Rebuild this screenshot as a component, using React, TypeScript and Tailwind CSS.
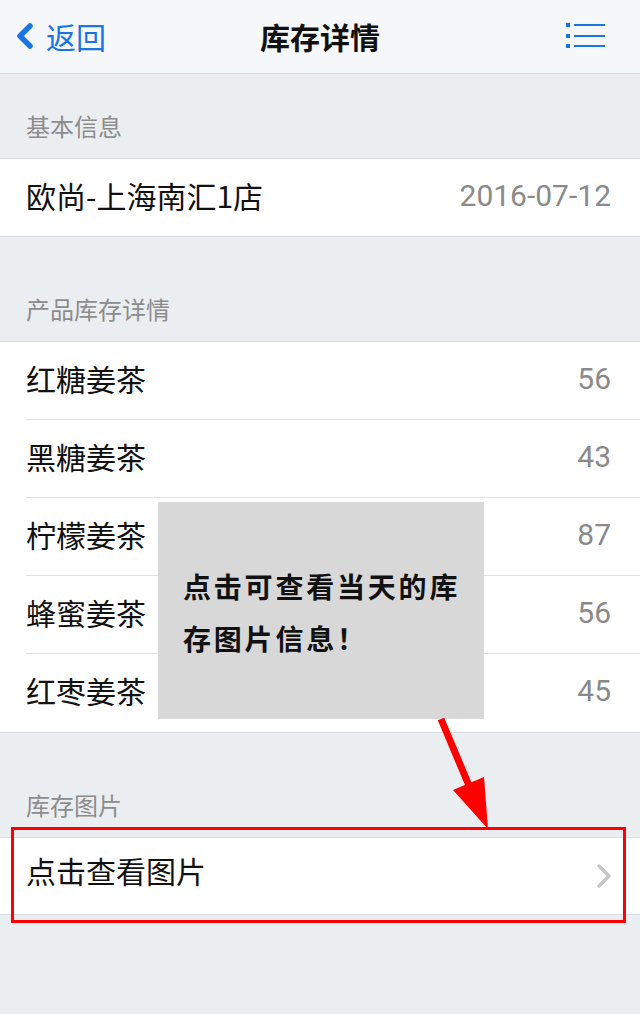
import React from "react";

const cjk = { fontFamily: '"Noto Sans CJK SC", "Noto Sans", sans-serif' };
const num = { fontFamily: 'Roboto, "Noto Sans CJK SC", sans-serif' };

function SectionLabel({ text, h }: { text: string; h: string }) {
  return (
    <div className={`${h} flex items-end pl-[26px] pb-[16px]`}>
      <span className="text-[24px] leading-[32px] text-[#8c8c8c]" style={cjk}>
        {text}
      </span>
    </div>
  );
}

const items = [
  ["红糖姜茶", "56"],
  ["黑糖姜茶", "43"],
  ["柠檬姜茶", "87"],
  ["蜂蜜姜茶", "56"],
  ["红枣姜茶", "45"],
];

export default function App() {
  return (
    <div className="relative w-[640px] h-[1014px] bg-[#ebeef1] overflow-hidden" style={cjk}>
      {/* Header */}
      <div className="h-[74px] bg-[#f6f7f8] border-b border-[#d6d8db] flex items-center relative pb-[2px]">
        <div className="flex items-center pl-[15px]">
          <svg width="19" height="26" viewBox="0 0 19 26" className="mr-[12px]">
            <path d="M15 3 L5 13 L15 23" stroke="#1a74e6" strokeWidth="5.5" fill="none" strokeLinecap="round" strokeLinejoin="round" />
          </svg>
          <span className="text-[30px] leading-none text-[#1a74e6]" style={cjk}>返回</span>
        </div>
        <div className="absolute left-0 right-0 top-0 h-[71px] flex items-center justify-center pointer-events-none">
          <span className="text-[30px] font-bold leading-none text-[#111]" style={cjk}>库存详情</span>
        </div>
        <div className="ml-auto mr-[34px]">
          <svg width="40" height="26" viewBox="0 0 40 26">
            <rect x="0" y="0" width="4" height="4" fill="#1a74e6" />
            <rect x="0" y="11" width="4" height="4" fill="#1a74e6" />
            <rect x="0" y="21" width="4" height="4" fill="#1a74e6" />
            <rect x="8" y="1" width="31" height="2" fill="#1a74e6" />
            <rect x="8" y="12" width="31" height="2" fill="#1a74e6" />
            <rect x="8" y="22" width="31" height="2" fill="#1a74e6" />
          </svg>
        </div>
      </div>

      <SectionLabel text="基本信息" h="h-[84px]" />
      <div className="h-[79px] bg-white border-y border-[#dcdde0] flex items-center justify-between pl-[26px] pr-[29px] pb-[5px]">
        <span className="text-[30px] text-[#111]" style={cjk}>欧尚-上海南汇1店</span>
        <span className="text-[30px] text-[#8a8a8a]" style={num}>2016-07-12</span>
      </div>

      <SectionLabel text="产品库存详情" h="h-[104px]" />
      <div className="bg-white border-y border-[#dcdde0]">
        {items.map(([name, n], i) => (
          <div key={name} className="pl-[26px]">
            <div
              className={`h-[78px] flex items-center justify-between pr-[29px] pb-[5px] ${
                i < items.length - 1 ? "border-b border-[#e0e0e0]" : ""
              }`}
            >
              <span className="text-[30px] text-[#111]" style={cjk}>{name}</span>
              <span className="text-[30px] text-[#8a8a8a]" style={num}>{n}</span>
            </div>
          </div>
        ))}
      </div>

      <SectionLabel text="库存图片" h="h-[104px]" />
      <div className="h-[78px] bg-white border-y border-[#dcdde0] flex items-center justify-between pl-[26px] pr-[28px] pb-[12px]">
        <span className="text-[30px] text-[#111]" style={cjk}>点击查看图片</span>
        <svg width="16" height="24" viewBox="0 0 16 24" className="mt-[12px]">
          <path d="M3 2 L13 12 L3 22" stroke="#c4c4c8" strokeWidth="3.2" fill="none" strokeLinecap="round" strokeLinejoin="round" />
        </svg>
      </div>

      {/* Tooltip annotation */}
      <div className="absolute left-[158px] top-[502px] w-[326px] h-[217px] bg-[#d8d8d8] pl-[25px] pt-[58px]">
        <p className="text-[28px] font-bold leading-[52px] tracking-[2.8px] text-[#111]" style={cjk}>
          点击可查看当天的库
          <br />
          存图片信息！
        </p>
      </div>

      {/* Red highlight box */}
      <div className="absolute left-[11px] top-[827px] w-[615px] h-[96px] border-[3px] border-[#ff0000]" />

      {/* Red arrow */}
      <svg className="absolute left-0 top-0 pointer-events-none" width="640" height="1014" viewBox="0 0 640 1014">
        <line x1="441" y1="719" x2="470" y2="788" stroke="#ff0000" strokeWidth="7" />
        <polygon points="453,790 484,777 488,829" fill="#ff0000" />
      </svg>
    </div>
  );
}
